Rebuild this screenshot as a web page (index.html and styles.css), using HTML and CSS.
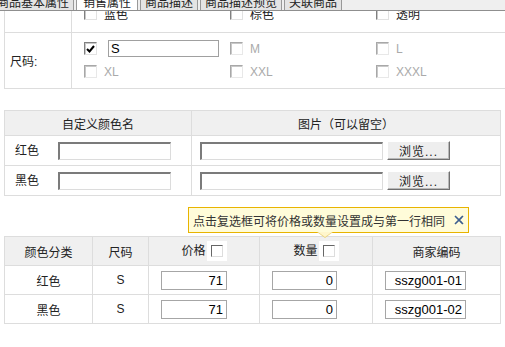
FILE: index.html
```html
<!DOCTYPE html>
<html>

<head>
    <meta charset="utf-8">
    <title>销售属性</title>
    <link rel="stylesheet" href="styles.css">
</head>

<body>
    <div class="page">
        <div class="tabs">
            <span class="tab">商品基本属性</span>
            <span class="tab active">销售属性</span>
            <span class="tab">商品描述</span>
            <span class="tab">商品描述预览</span>
            <span class="tab">关联商品</span>
        </div>

        <div class="panel">
            <div class="content">
                <table class="attr">
                    <tr>
                        <td class="label">颜色:</td>
                        <td class="opts first">
                            <div class="opt-grid">
                                <label class="opt"><span class="cb checked"><svg width="9" height="8" viewBox="0 0 9 8"><path d="M1 4 L3.5 6.5 L8 1" fill="none" stroke="#000" stroke-width="2"/></svg></span>红色</label>
                                <label class="opt"><span class="cb checked"><svg width="9" height="8" viewBox="0 0 9 8"><path d="M1 4 L3.5 6.5 L8 1" fill="none" stroke="#000" stroke-width="2"/></svg></span>黑色</label>
                                <label class="opt"><span class="cb"></span>白色</label>
                                <label class="opt"><span class="cb"></span>蓝色</label>
                                <label class="opt"><span class="cb"></span>棕色</label>
                                <label class="opt"><span class="cb"></span>透明</label>
                            </div>
                        </td>
                    </tr>
                    <tr>
                        <td class="label">尺码:</td>
                        <td class="opts">
                            <div class="opt-grid">
                                <label class="opt"><span class="cb checked"><svg width="9" height="8" viewBox="0 0 9 8"><path d="M1 4 L3.5 6.5 L8 1" fill="none" stroke="#000" stroke-width="2"/></svg></span><input class="alias" type="text" value="S"></label>
                                <label class="opt off"><span class="cb"></span>M</label>
                                <label class="opt off"><span class="cb"></span>L</label>
                                <label class="opt off"><span class="cb"></span>XL</label>
                                <label class="opt off"><span class="cb"></span>XXL</label>
                                <label class="opt off"><span class="cb"></span>XXXL</label>
                            </div>
                        </td>
                    </tr>
                </table>

                <table class="grid colors">
                    <tr>
                        <th class="c-name">自定义颜色名</th>
                        <th>图片（可以留空）</th>
                    </tr>
                    <tr>
                        <td class="name-cell"><span class="cname">红色</span><input class="inset name-in" type="text"></td>
                        <td class="pic-cell"><input class="inset file-in" type="text"><button class="browse">浏览...</button></td>
                    </tr>
                    <tr>
                        <td class="name-cell"><span class="cname">黑色</span><input class="inset name-in" type="text"></td>
                        <td class="pic-cell"><input class="inset file-in" type="text"><button class="browse">浏览...</button></td>
                    </tr>
                </table>

                <div class="tip">
                    <span>点击复选框可将价格或数量设置成与第一行相同</span>
                    <span class="tip-close"><svg width="10" height="10" viewBox="0 0 10 10"><path d="M1 1 L9 9 M9 1 L1 9" stroke="#3d5f8f" stroke-width="1.6"/></svg></span>
                </div>

                <table class="grid sku">
                    <tr>
                        <th class="w-color">颜色分类</th>
                        <th class="w-size">尺码</th>
                        <th class="w-price">价格<span class="hcb"><span class="cb"></span></span></th>
                        <th class="w-qty">数量<span class="hcb"><span class="cb"></span></span></th>
                        <th>商家编码</th>
                    </tr>
                    <tr>
                        <td>红色</td>
                        <td>S</td>
                        <td class="in-cell"><input class="num price" type="text" value="71"></td>
                        <td class="in-cell"><input class="num qty" type="text" value="0"></td>
                        <td class="in-cell"><input class="num code" type="text" value="sszg001-01"></td>
                    </tr>
                    <tr>
                        <td>黑色</td>
                        <td>S</td>
                        <td class="in-cell"><input class="num price" type="text" value="71"></td>
                        <td class="in-cell"><input class="num qty" type="text" value="0"></td>
                        <td class="in-cell"><input class="num code" type="text" value="sszg001-02"></td>
                    </tr>
                </table>
            </div>
        </div>
    </div>
</body>

</html>
```

FILE: styles.css
```css
* {
    box-sizing: border-box;
}

body {
    margin: 0;
    background-color: #fff;
    color: #333;
    font: 12px "Liberation Sans", "Noto Sans CJK SC", sans-serif;
    overflow: hidden;
}

.page {
    width: 505px;
    height: 347px;
    overflow: hidden;
}

/* tab strip, scrolled half out of view */
.tabs {
    display: flex;
    align-items: flex-end;
    height: 11px;
    overflow: hidden;
    background-color: #efefef;
    border-bottom: 1px solid #8f8f8f;
}

.tab {
    flex: none;
    line-height: 14px;
    padding: 0 4px;
    margin-right: 2px;
    background-color: #e4e4e4;
    border: 1px solid #999;
    border-bottom: 0;
    color: #222;
}

.tab:first-child {
    margin-left: -8px;
}

.tab.active {
    padding: 0 6px;
    background-color: #fff;
}

.panel {
    height: 336px;
    overflow: hidden;
    padding: 0 4px;
}

.content {
    margin-top: -37px;
}

/* attribute table */
.attr {
    border-collapse: collapse;
    table-layout: fixed;
    width: 505px;
}

.attr td {
    border: 1px solid #ddd;
    padding: 0;
}

.attr .label {
    width: 67px;
    padding-left: 5px;
    color: #222;
}

.attr .opts {
    padding: 4px 0 5px 12px;
}

.attr .opts.first {
    padding-bottom: 7px;
}

.opt-grid {
    display: grid;
    grid-template-columns: repeat(3, 146px);
}

.opt {
    display: flex;
    align-items: center;
    gap: 7px;
    height: 23px;
    color: #222;
}

.opt.off {
    color: #aaa;
}

.cb {
    display: inline-flex;
    align-items: center;
    justify-content: center;
    width: 13px;
    height: 13px;
    background-color: #fff;
    border: 1px solid;
    border-color: #808080 #e2e2e2 #e2e2e2 #808080;
    box-shadow: inset 1px 1px #c8c8c8;
    flex: none;
}

.opt.off .cb {
    border-color: #a8a8a8 #e8e8e8 #e8e8e8 #a8a8a8;
}

.alias {
    width: 111px;
    height: 17px;
    margin-left: 4px;
    padding: 0 2px;
    border: 1px solid #a0a0a0;
    font: 13px "Liberation Sans", sans-serif;
    color: #000;
}

/* shared grid tables */
.grid {
    border-collapse: collapse;
    table-layout: fixed;
    width: 497px;
}

.grid th,
.grid td {
    border: 1px solid #ddd;
    padding: 0;
}

.grid th {
    background-color: #f0f0f0;
    font-weight: normal;
    color: #222;
}

.colors {
    margin-top: 21px;
}

.colors th {
    height: 25px;
}

.colors td {
    height: 30px;
}

.colors .c-name {
    width: 187px;
}

.name-cell {
    padding-left: 10px !important;
}

.cname {
    display: inline-block;
    width: 43px;
    color: #222;
}

.inset {
    height: 18px;
    vertical-align: middle;
    border-style: solid;
    border-width: 2px 1px 1px 2px;
    border-color: #7b7b7b #dcdcdc #dcdcdc #7b7b7b;
    background-color: #fff;
}

.name-in {
    width: 113px;
}

.pic-cell {
    padding-left: 8px !important;
}

.file-in {
    width: 183px;
}

.browse {
    width: 63px;
    height: 19px;
    margin-left: 4px;
    padding: 0;
    vertical-align: middle;
    background-color: #eeeeee;
    border: 1px solid;
    border-color: #fff #6f6f6f #6f6f6f #fff;
    box-shadow: inset -1px -1px #b8b8b8;
    font: 12px "Liberation Sans", "Noto Sans CJK SC", sans-serif;
    letter-spacing: 1px;
    color: #222;
}

/* hint bubble */
.tip {
    position: relative;
    display: flex;
    align-items: center;
    width: 281px;
    height: 26px;
    margin: 11px 0 3px 184px;
    padding: 0 4px;
    background-color: #fffcd9;
    border: 1px solid #e8b400;
    color: #333;
    z-index: 1;
}

.tip-close {
    display: flex;
    margin-left: auto;
}

.tip::before,
.tip::after {
    content: "";
    position: absolute;
    top: 100%;
    width: 0;
    height: 0;
    border-style: solid;
    border-color: transparent;
}

.tip::before {
    left: 128px;
    border-width: 6px 8px 0;
    border-top-color: #ecd27a;
}

.tip::after {
    left: 129px;
    border-width: 5px 7px 0;
    border-top-color: #fff6cc;
}

/* sku table */
.sku th {
    height: 29px;
}

.sku td {
    height: 29px;
    text-align: center;
    color: #222;
}

.sku .w-color {
    width: 88px;
}

.sku .w-size {
    width: 56px;
}

.sku .w-price {
    width: 111px;
}

.sku .w-qty {
    width: 113px;
}

.hcb {
    display: inline-flex;
    padding: 4px;
    margin-left: 1px;
    background-color: #fff;
    vertical-align: middle;
}

.hcb .cb {
    width: 12px;
    height: 12px;
    border-color: #666 #ddd #ddd #666;
    box-shadow: none;
}

.sku td.in-cell {
    text-align: left;
    padding-left: 12px;
}

.num {
    height: 19px;
    padding: 0 3px;
    border: 1px solid #a6a6a6;
    text-align: right;
    font: 13px "Liberation Sans", sans-serif;
    color: #000;
    vertical-align: middle;
}

.price {
    width: 66px;
}

.qty {
    width: 65px;
}

.code {
    width: 81px;
}
```
